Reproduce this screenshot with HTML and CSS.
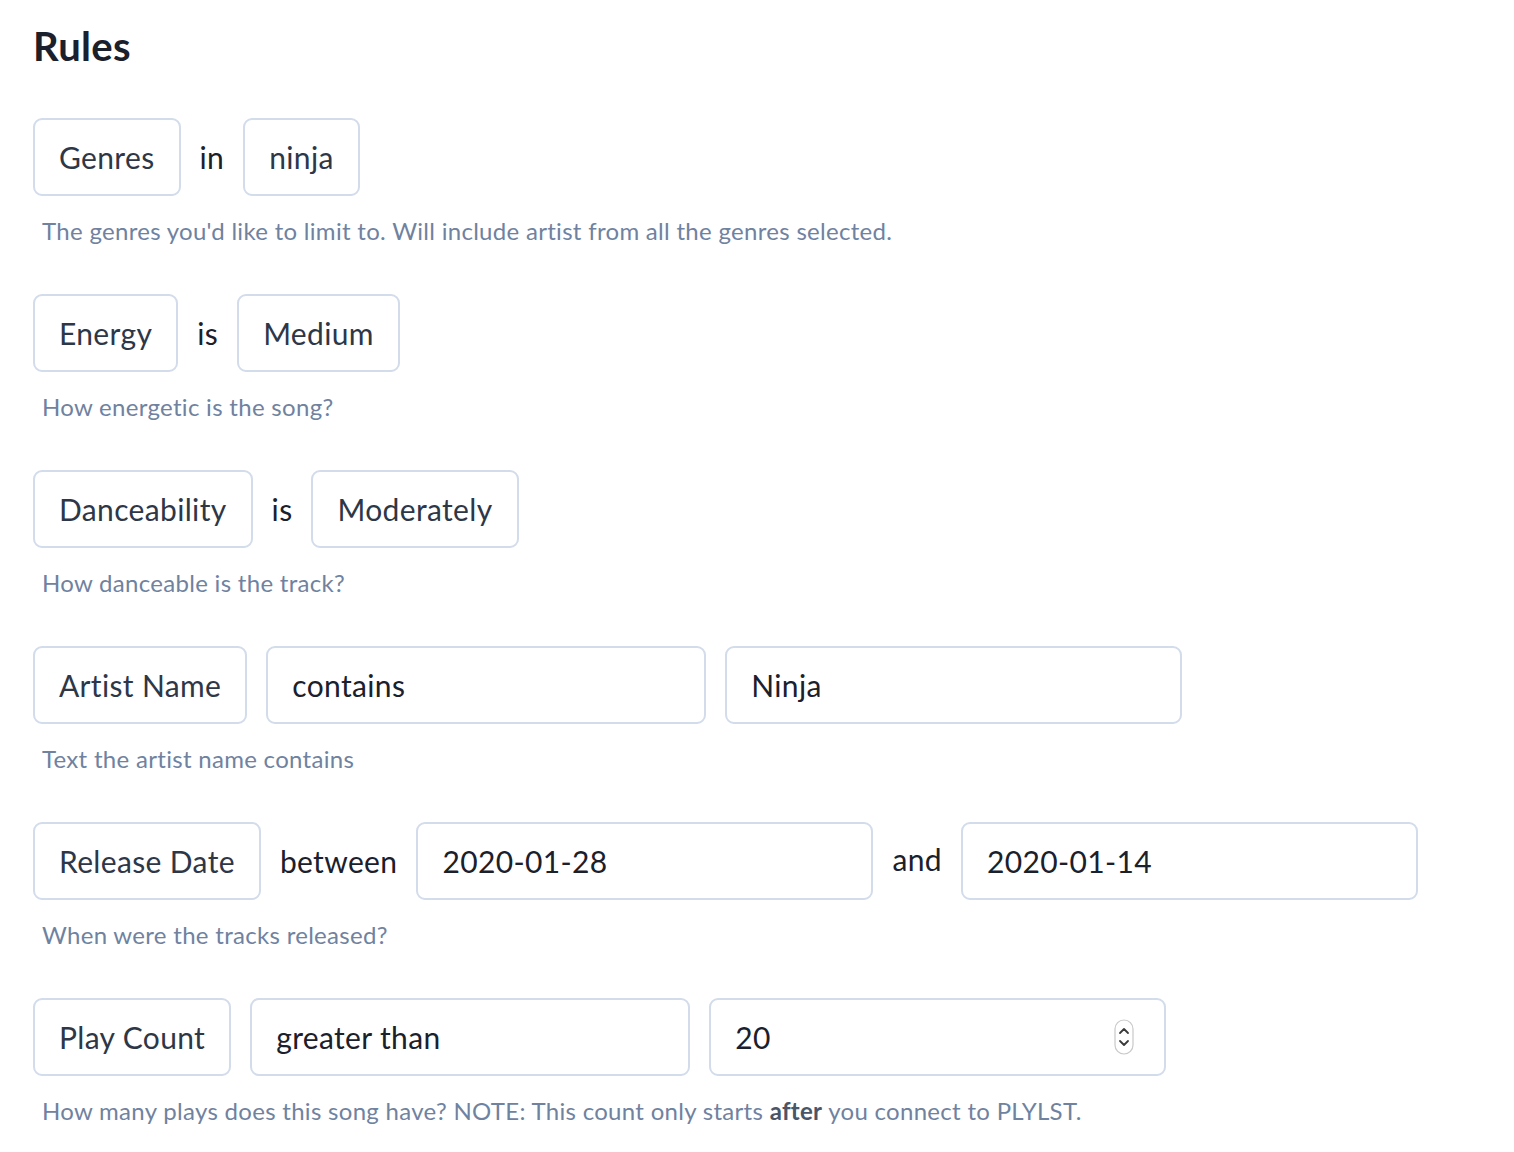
FILE: index.html
```html
<!DOCTYPE html>
<html lang="en">
<head>
<meta charset="utf-8">
<title>Rules</title>
<link rel="stylesheet" href="styles.css">
</head>
<body>
<main class="page">
  <h1 class="title">Rules</h1>

  <section class="rule">
    <div class="row">
      <div class="chip">Genres</div>
      <span class="word">in</span>
      <div class="chip">ninja</div>
    </div>
    <p class="desc">The genres you'd like to limit to. Will include artist from all the genres selected.</p>
  </section>

  <section class="rule">
    <div class="row">
      <div class="chip">Energy</div>
      <span class="word">is</span>
      <div class="chip">Medium</div>
    </div>
    <p class="desc">How energetic is the song?</p>
  </section>

  <section class="rule">
    <div class="row">
      <div class="chip">Danceability</div>
      <span class="word">is</span>
      <div class="chip">Moderately</div>
    </div>
    <p class="desc">How danceable is the track?</p>
  </section>

  <section class="rule">
    <div class="row">
      <div class="chip">Artist Name</div>
      <div class="field field-select">contains</div>
      <div class="field field-input">Ninja</div>
    </div>
    <p class="desc">Text the artist name contains</p>
  </section>

  <section class="rule">
    <div class="row">
      <div class="chip">Release Date</div>
      <span class="word">between</span>
      <div class="field field-input">2020-01-28</div>
      <span class="word word-up">and</span>
      <div class="field field-input">2020-01-14</div>
    </div>
    <p class="desc">When were the tracks released?</p>
  </section>

  <section class="rule">
    <div class="row">
      <div class="chip">Play Count</div>
      <div class="field field-select">greater than</div>
      <div class="field field-input field-number">
        <span>20</span>
        <svg class="spinner" width="20" height="36" viewBox="0 0 20 36" aria-hidden="true">
          <rect x="1" y="1" width="18" height="34" rx="9" ry="9" fill="#fff" stroke="#c9c9c9" stroke-width="1.2"/>
          <path d="M6 14 L10 10 L14 14" fill="none" stroke="#3a3a3a" stroke-width="1.8" stroke-linecap="round" stroke-linejoin="round"/>
          <path d="M6 22 L10 26 L14 22" fill="none" stroke="#3a3a3a" stroke-width="1.8" stroke-linecap="round" stroke-linejoin="round"/>
        </svg>
      </div>
    </div>
    <p class="desc">How many plays does this song have? NOTE: This count only starts <strong>after</strong> you connect to PLYLST.</p>
  </section>
</main>
</body>
</html>
```

FILE: styles.css
```css
html, body {
  margin: 0;
  padding: 0;
  background: #ffffff;
}

body {
  font-family: "Lato", "Open Sans", sans-serif;
  color: #1a202c;
}

.page {
  padding: 23px 33px 0 33px;
}

.title {
  margin: 0 0 49px 0;
  font-size: 40px;
  line-height: 46px;
  font-weight: 700;
  color: #1a202c;
  letter-spacing: 0.3px;
}

.rule {
  margin-bottom: 47px;
}

.row {
  display: flex;
  align-items: center;
  gap: 19px;
}

.chip,
.field {
  box-sizing: border-box;
  height: 78px;
  border: 2px solid #d3dceb;
  border-radius: 9px;
  display: flex;
  align-items: center;
  font-size: 30px;
  letter-spacing: 0.35px;
  color: #2d3748;
  background: #fff;
}

.chip {
  padding: 0 24px;
}

.field {
  padding: 0 24px;
  color: #1a202c;
}

.field-select {
  width: 440px;
}

.field-input {
  width: 457px;
}

.field-number {
  justify-content: space-between;
  padding-right: 30px;
}

.spinner {
  display: block;
}

.word {
  font-size: 30px;
  letter-spacing: 0.35px;
  color: #1a202c;
}

.word-up {
  position: relative;
  top: -2px;
}

.desc {
  margin: 19px 0 0 9px;
  font-size: 24px;
  line-height: 32px;
  letter-spacing: 0.3px;
  color: #6f82a0;
}

.desc strong {
  font-weight: 700;
  color: #4a5568;
}
```
